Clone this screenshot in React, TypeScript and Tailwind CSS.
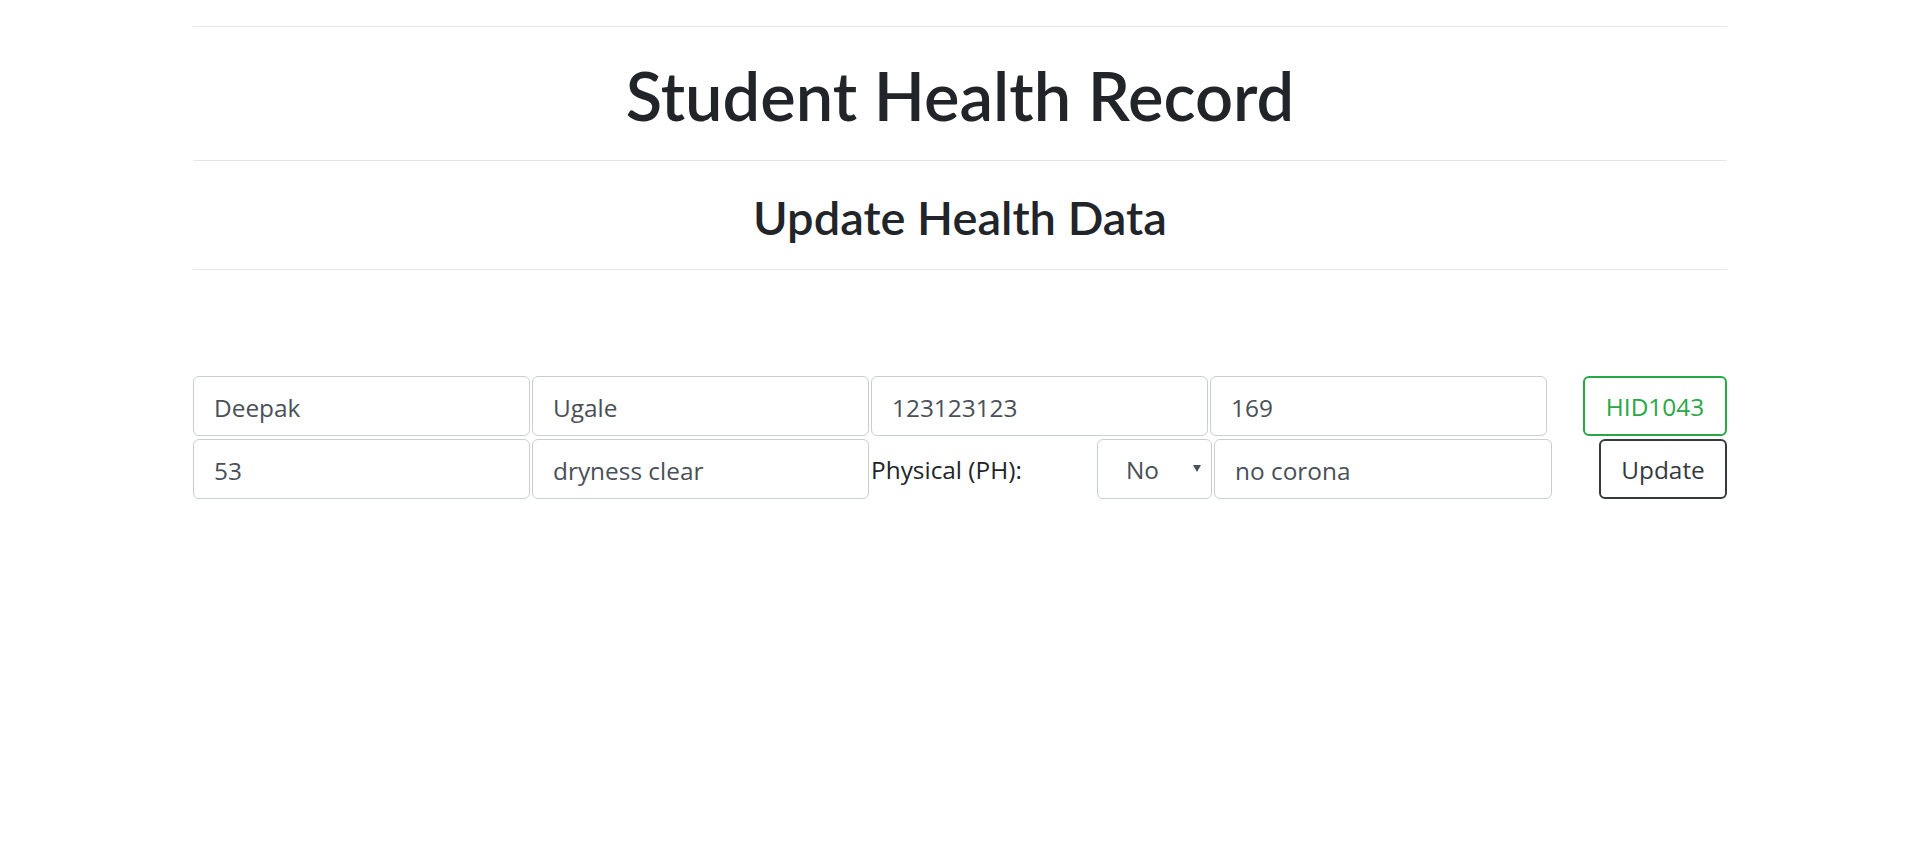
const inputCls =
  "h-[60px] rounded-[6px] border border-[#c9ced4] bg-white pl-[20px] pr-3 pt-[2px] text-[24.4px] text-[#495057] outline-none";

export default function App() {
  return (
    <div className="min-h-[841px] bg-white font-['Open_Sans',sans-serif] text-[#212529]">
      <div className="mx-[193px] pt-[26px]">
        <div className="h-[134px] border-t border-[#e6e6e6] pt-[35px] text-center">
          <h1 className="font-['Lato',sans-serif] text-[66.8px] font-semibold leading-none">Student Health Record</h1>
        </div>
        <div className="h-[109px] border-t border-[#e6e6e6] pt-[33px] text-center">
          <h2 className="font-['Lato',sans-serif] text-[47px] font-semibold leading-none">Update Health Data</h2>
        </div>
        <div className="border-t border-[#e6e6e6]" />

        <form className="mt-[106px] flex flex-col gap-[3px]" onSubmit={(e) => e.preventDefault()}>
          <div className="flex items-center gap-[2px]">
            <input className={`${inputCls} w-[337px]`} defaultValue="Deepak" />
            <input className={`${inputCls} w-[337px]`} defaultValue="Ugale" />
            <input className={`${inputCls} w-[337px]`} defaultValue="123123123" />
            <input className={`${inputCls} w-[337px]`} defaultValue="169" />
            <button
              type="button"
              className="ml-auto h-[60px] w-[144px] rounded-[6px] border-2 border-[#28a745] pt-[2px] text-[24.4px] text-[#28a745]"
            >
              HID1043
            </button>
          </div>

          <div className="flex items-center gap-[2px]">
            <input className={`${inputCls} w-[337px]`} defaultValue="53" />
            <input className={`${inputCls} w-[337px]`} defaultValue="dryness clear" />
            <label className="w-[224px] pt-[2px] text-[24.4px] text-[#212529]">Physical (PH):</label>
            <div className="relative">
              <select
                defaultValue="No"
                className="h-[60px] w-[115px] appearance-none rounded-[6px] border border-[#c9ced4] bg-white pl-[28px] pt-[2px] text-[24.4px] text-[#495057] outline-none"
              >
                <option>No</option>
                <option>Yes</option>
              </select>
              <svg
                className="pointer-events-none absolute left-[96px] top-[25px]"
                width="8"
                height="8"
                viewBox="0 0 8 8"
              >
                <path d="M0 1 L8 1 L4 8 Z" fill="#495057" />
              </svg>
            </div>
            <input className={`${inputCls} w-[338px]`} defaultValue="no corona" />
            <button
              type="submit"
              className="ml-auto h-[60px] w-[128px] rounded-[6px] border-2 border-[#343a40] pt-[2px] text-[24.4px] text-[#343a40]"
            >
              Update
            </button>
          </div>
        </form>
      </div>
    </div>
  );
}
